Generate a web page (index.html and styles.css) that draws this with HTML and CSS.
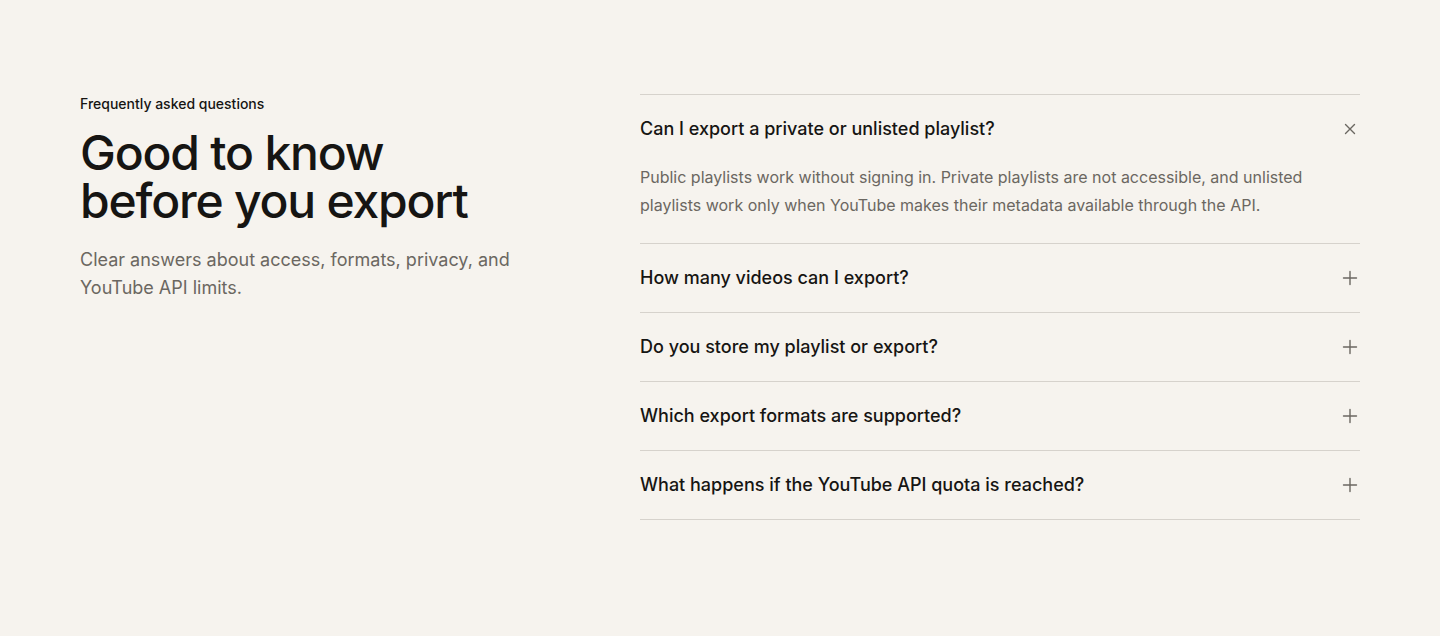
FILE: index.html
```html
<!DOCTYPE html>
<html lang="en">
<head>
<meta charset="utf-8">
<title>FAQ</title>
<link rel="stylesheet" href="styles.css">
</head>
<body>
<section class="faq">
  <div class="intro">
    <p class="eyebrow">Frequently asked questions</p>
    <h2 class="title">Good to know<br>before you export</h2>
    <p class="lead">Clear answers about access, formats, privacy, and YouTube API limits.</p>
  </div>
  <div class="list">
    <div class="item open">
      <div class="question">
        <span>Can I export a private or unlisted playlist?</span>
        <svg class="icon" viewBox="0 0 16 16" width="16" height="16"><path d="M3.5 3.5l9 9M12.5 3.5l-9 9"/></svg>
      </div>
      <p class="answer">Public playlists work without signing in. Private playlists are not accessible, and unlisted playlists work only when YouTube makes their metadata available through the API.</p>
    </div>
    <div class="item">
      <div class="question">
        <span>How many videos can I export?</span>
        <svg class="icon" viewBox="0 0 16 16" width="16" height="16"><path d="M8 1.5v13M1.5 8h13"/></svg>
      </div>
    </div>
    <div class="item">
      <div class="question">
        <span>Do you store my playlist or export?</span>
        <svg class="icon" viewBox="0 0 16 16" width="16" height="16"><path d="M8 1.5v13M1.5 8h13"/></svg>
      </div>
    </div>
    <div class="item">
      <div class="question">
        <span>Which export formats are supported?</span>
        <svg class="icon" viewBox="0 0 16 16" width="16" height="16"><path d="M8 1.5v13M1.5 8h13"/></svg>
      </div>
    </div>
    <div class="item">
      <div class="question">
        <span>What happens if the YouTube API quota is reached?</span>
        <svg class="icon" viewBox="0 0 16 16" width="16" height="16"><path d="M8 1.5v13M1.5 8h13"/></svg>
      </div>
    </div>
  </div>
</section>
</body>
</html>
```
FILE: styles.css
```css
* { box-sizing: border-box; }
html, body {
  margin: 0;
  padding: 0;
  background: #f6f3ee;
  color: #161513;
  font-family: Inter, "Noto Sans", sans-serif;
}
.faq {
  display: grid;
  grid-template-columns: 480px 720px;
  column-gap: 80px;
  padding: 94px 80px 0;
}
.eyebrow {
  margin: 0;
  font-size: 14px;
  line-height: 20px;
  font-weight: 500;
  color: #161513;
}
.title {
  margin: 15px 0 0;
  font-size: 48px;
  line-height: 48px;
  font-weight: 500;
  letter-spacing: -0.025em;
  color: #161513;
}
.lead {
  margin: 21px 0 0;
  font-size: 18px;
  line-height: 28px;
  color: #6b6761;
  max-width: 460px;
}
.list {
  border-top: 1px solid #d6d2cc;
}
.item {
  border-bottom: 1px solid #d6d2cc;
}
.question {
  display: flex;
  align-items: center;
  justify-content: space-between;
  padding: 22px 0;
  font-size: 18px;
  line-height: 24px;
  font-weight: 500;
  color: #161513;
}
.icon {
  fill: none;
  stroke: #6b6761;
  stroke-width: 1.4;
  stroke-linecap: round;
  margin-right: 2px;
}
.answer {
  margin: 0;
  padding: 0 48px 24px 0;
  font-size: 16px;
  line-height: 28px;
  color: #6b6761;
}
```
